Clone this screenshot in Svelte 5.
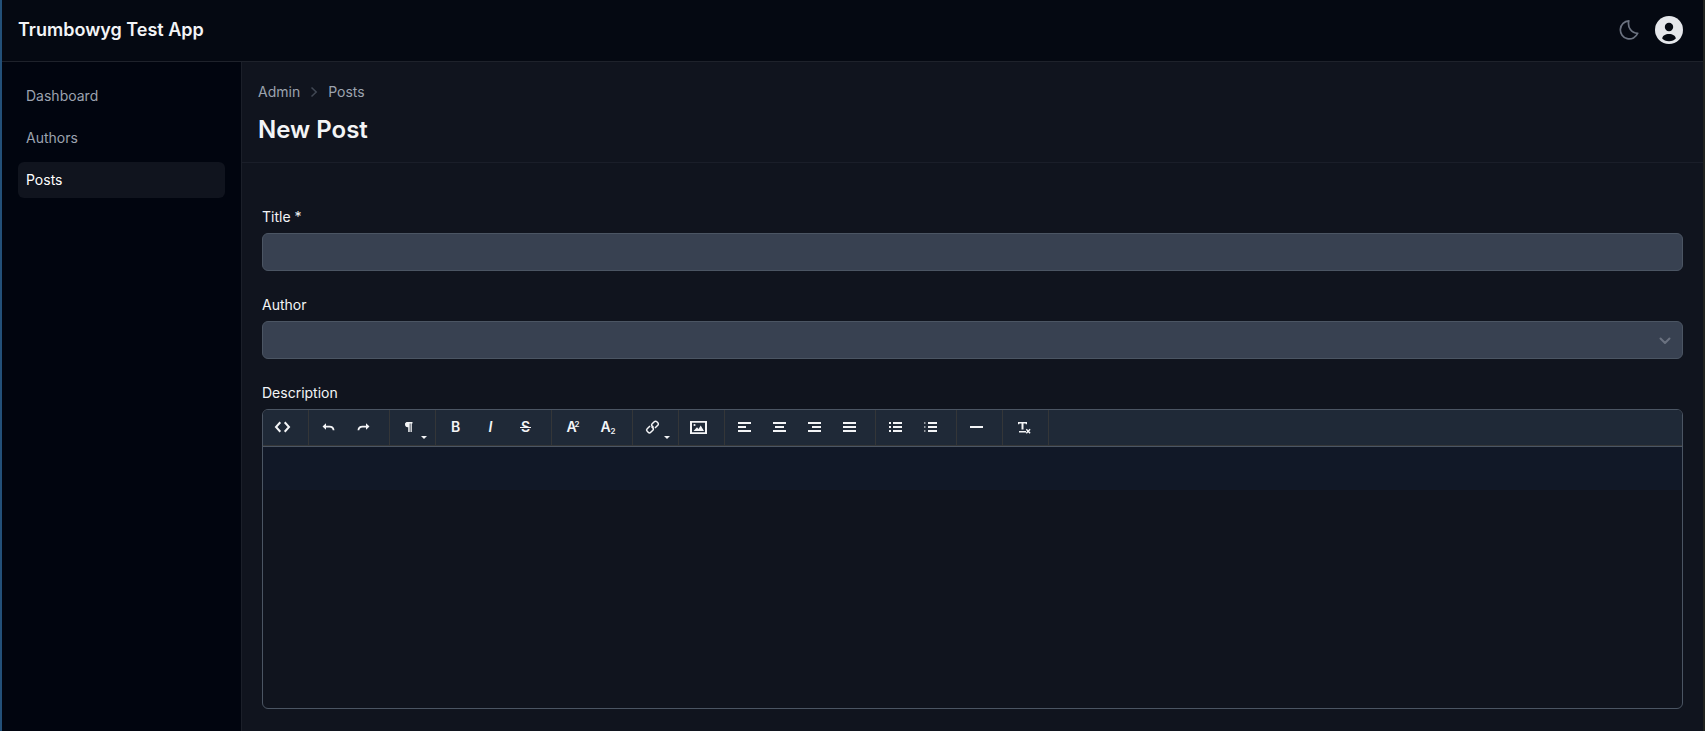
<script>
  const nav = ['Dashboard', 'Authors', 'Posts'];
  const groups = [
    ['View HTML'],
    ['Undo', 'Redo'],
    ['Formatting'],
    ['Strong', 'Emphasis', 'Deleted'],
    ['Superscript', 'Subscript'],
    ['Link'],
    ['Insert Image'],
    ['Align Left', 'Align Center', 'Align Right', 'Align Justify'],
    ['Unordered list', 'Ordered list'],
    ['Insert horizontal rule'],
    ['Remove format']
  ];
  const dropdowns = ['Formatting', 'Link'];
  const letters = { Strong: 'B', Emphasis: 'I', Deleted: 'S' };
  const fills = {
    'Align Left': 'M2 3h13v2H2zM2 7h8v2H2zM2 11h13v2H2z',
    'Align Center': 'M2 3h13v2H2zM4 7h9v2H4zM2 11h13v2H2z',
    'Align Right': 'M2 3h13v2H2zM6 7h9v2H6zM2 11h13v2H2z',
    'Align Justify': 'M2 3h13v2H2zM2 7h13v2H2zM2 11h13v2H2z',
    'Unordered list': 'M2 3h2v2H2zM2 7h2v2H2zM2 11h2v2H2zM6 3h9v2H6zM6 7h9v2H6zM6 11h9v2H6z',
    'Ordered list': 'M6 3h9v2H6zM6 7h9v2H6zM6 11h9v2H6z',
    'Insert horizontal rule': 'M2 7h13v2H2z',
    'Formatting': 'M5.500 3h6v1.500h-.7V13H9.500V4.500h-.8V13H7.200V8.300H7A2.800 2.800 0 0 1 5.500 3z',
    'Undo': 'M2.500 7.500L6 4.300V6.700H9.500C12.500 6.700 14.200 8 14.500 11.300H12.700C12.400 9.300 11.500 8.500 9.500 8.500H6V10.700z',
    'Redo': 'M14.500 7.500L11 4.300V6.700H7.500C4.500 6.700 2.800 8 2.500 11.300H4.300C4.600 9.300 5.500 8.500 7.500 8.500H11V10.700z'
  };
</script>

<div class="app">
  <header class="topbar">
    <a class="brand" href="#home">Trumbowyg Test App</a>
    <div class="actions">
      <button class="plain" aria-label="Toggle dark mode">
        <svg width="20" height="20" viewBox="0 0 20 20" fill="none" stroke="#6b7280" stroke-width="1.7" stroke-linejoin="round"><path d="M9.8 .9A9 9 0 1 0 18.700 13.300C12.500 13.300 8.300 7.500 9.800 .9Z" /></svg>
      </button>
      <button class="plain" aria-label="User menu">
        <svg width="28" height="28" viewBox="0 0 28 28"><circle cx="14" cy="14" r="14" fill="#e5e7eb" /><circle cx="14" cy="11" r="4.2" fill="#050912" /><path d="M7.2 22.600C7.600 19.500 10.300 18 14 18s6.400 1.500 6.800 4.600C19.600 24.300 17 25.200 14 25.200s-5.600-.9-6.800-2.600Z" fill="#050912" /></svg>
      </button>
    </div>
  </header>

  <div class="body">
    <nav class="sidebar" aria-label="Main">
      {#each nav as item}
        <a href={'#' + item.toLowerCase()} class:active={item === 'Posts'}>{item}</a>
      {/each}
    </nav>

    <main>
      <div class="heading">
        <div class="crumbs">
          <a href="#admin">Admin</a>
          <svg width="8" height="12" viewBox="0 0 8 12" fill="none" stroke="#414854" stroke-width="1.5"><path d="M1.500 1.500L6.200 6L1.500 10.500" /></svg>
          <a href="#posts">Posts</a>
        </div>
        <h1>New Post</h1>
      </div>

      <form>
        <div class="field">
          <label for="title">Title *</label>
          <input id="title" type="text" />
        </div>
        <div class="field">
          <label for="author">Author</label>
          <div class="select">
            <select id="author"><option value=""></option></select>
            <svg width="12" height="8" viewBox="0 0 12 8" fill="none" stroke="#6b7280" stroke-width="2" stroke-linecap="round" stroke-linejoin="round"><path d="M1.500 1.500L6 6L10.500 1.500" /></svg>
          </div>
        </div>
        <div class="field">
          <label for="description">Description</label>
          <div class="editor">
            <div class="toolbar" role="toolbar" aria-label="Formatting tools">
              {#each groups as group}
                <div class="group">
                  {#each group as name}
                    <button type="button" class="tool" aria-label={name}>
                      {#if letters[name]}
                        <span class={'letter ' + name.toLowerCase()}>{letters[name]}</span>
                      {:else if name === 'Superscript'}
                        <span class="letter script">A<small class="up">2</small></span>
                      {:else if name === 'Subscript'}
                        <span class="letter script">A<small class="down">2</small></span>
                      {:else if name === 'Remove format'}
                        <svg width="17" height="16" viewBox="0 0 17 16"><path d="M4 3h9v2.300H11.700V4.500H9.500v6H7.500v-6H5.300v.8H4zM5 12h7v1.500H5z" fill="currentColor" /><path d="M12.300 10.300l3.800 4M16.100 10.300l-3.800 4" stroke="currentColor" stroke-width="1.400" /></svg>
                      {:else if name === 'View HTML'}
                        <svg width="17" height="16" viewBox="0 0 17 16" fill="none" stroke="currentColor" stroke-width="2"><path d="M6.300 3.300L2 8l4.300 4.700M10.700 3.300L15 8l-4.300 4.700" /></svg>
                      {:else if name === 'Link'}
                        <svg width="17" height="16" viewBox="0 0 17 16" fill="none" stroke="currentColor" stroke-width="1.500"><g transform="rotate(-45 8.500 8)"><path d="M7.500 5.500H3.500A1.800 1.800 0 0 0 1.700 7.300V8.700A1.800 1.800 0 0 0 3.500 10.500H6.500A1.800 1.800 0 0 0 8.300 8.700M9.500 10.500H13.500A1.800 1.800 0 0 0 15.300 8.700V7.300A1.800 1.800 0 0 0 13.500 5.500H10.500A1.800 1.800 0 0 0 8.700 7.300M7.300 8H9.700" /></g></svg>
                      {:else if name === 'Insert Image'}
                        <svg width="17" height="16" viewBox="0 0 17 16"><path fill="currentColor" fill-rule="evenodd" d="M0 2h17v13H0zM2 3.700v9.600h13V3.700z" /><circle cx="4.500" cy="6" r="1.100" fill="currentColor" /><path fill="currentColor" d="M3.500 12L7 8.300l1.500 1.700 2.200-3.500 3.300 5.500z" /></svg>
                      {:else}
                        <svg width="17" height="16" viewBox="0 0 17 16" fill="currentColor">
                          <path d={fills[name]} />
                          {#if name === 'Ordered list'}
                            <path opacity=".55" d="M2 3h1.500v2H2zM2 7h1.500v2H2zM2 11h1.500v2H2z" />
                          {/if}
                        </svg>
                      {/if}
                      {#if dropdowns.includes(name)}<i class="caret"></i>{/if}
                    </button>
                  {/each}
                </div>
              {/each}
            </div>
            <textarea id="description" rows="1"></textarea>
          </div>
        </div>
      </form>
    </main>
  </div>
</div>

<style>
  :global(body) {
    background: #10141e;
  }
  .app {
    display: flex;
    flex-direction: column;
    box-sizing: border-box;
    min-height: 100vh;
    border-left: 2px solid #235078;
    border-right: 2px solid #20221f;
    background: #10141e;
    color: #f3f4f6;
    font: 14px/20px Inter, 'Liberation Sans', sans-serif;
  }
  a {
    color: inherit;
    text-decoration: none;
  }
  .topbar {
    display: flex;
    align-items: center;
    justify-content: space-between;
    box-sizing: border-box;
    height: 62px;
    padding: 0 20px 2px 16px;
    border-bottom: 1px solid #1e222b;
    background: #050912;
  }
  .brand {
    font-size: 18px;
    line-height: 28px;
    font-weight: 600;
  }
  .actions {
    display: flex;
    align-items: center;
    gap: 16px;
  }
  .plain {
    display: flex;
    padding: 0;
    border: 0;
    background: none;
  }
  .body {
    flex: 1;
    display: flex;
  }
  .sidebar {
    display: flex;
    flex-direction: column;
    gap: 6px;
    box-sizing: border-box;
    flex: 0 0 240px;
    padding: 16px;
    border-right: 1px solid #1b1f29;
    background: #01050f;
    color: #9ca3af;
  }
  .sidebar a {
    padding: 8px;
    border-radius: 6px;
  }
  .sidebar .active {
    background: #10141e;
    color: #fff;
  }
  main {
    flex: 1;
    min-width: 0;
  }
  .heading {
    display: flex;
    flex-direction: column;
    gap: 12px;
    padding: 20px 16px 16px;
    border-bottom: 1px solid #1a1e29;
  }
  .crumbs {
    display: flex;
    align-items: center;
    gap: 10px;
    color: #9ca3af;
  }
  h1 {
    margin: 0;
    font-size: 24px;
    line-height: 32px;
    font-weight: 600;
  }
  form {
    display: flex;
    flex-direction: column;
    gap: 24px;
    padding: 44px 20px 22px;
  }
  .field {
    display: flex;
    flex-direction: column;
    gap: 6px;
  }
  input,
  select {
    box-sizing: border-box;
    width: 100%;
    height: 38px;
    padding: 8px 12px;
    border: 1px solid #4b5563;
    border-radius: 6px;
    background: #384151;
    color: inherit;
    font: inherit;
    appearance: none;
  }
  .select {
    display: flex;
    position: relative;
  }
  .select svg {
    position: absolute;
    right: 12px;
    top: 16px;
    pointer-events: none;
  }
  .editor {
    box-sizing: border-box;
    min-height: 300px;
    border: 1px solid #4b5563;
    border-radius: 6px;
    overflow: hidden;
  }
  .toolbar {
    display: flex;
    border-bottom: 1px solid #4b5563;
    background: #1f2937;
  }
  .group {
    display: flex;
    padding: 0 8px 0 2px;
    border-right: 1px solid #343638;
    border-bottom: 1px solid #343638;
  }
  .toolbar::after {
    content: '';
    flex: 1;
    border-bottom: 1px solid #343638;
  }
  .tool {
    display: flex;
    align-items: center;
    justify-content: center;
    position: relative;
    box-sizing: border-box;
    width: 35px;
    height: 35px;
    padding: 0 0 1px;
    border: 0;
    background: none;
    color: #f3f4f6;
  }
  .letter {
    font: 600 14px/16px Inter, sans-serif;
  }
  .letter small {
    display: inline-block;
    font-size: 8px;
    line-height: 8px;
  }
  .script {
    padding-left: 3px;
  }
  .up {
    vertical-align: 5px;
    margin-left: -2px;
  }
  .down {
    vertical-align: -2px;
  }
  .emphasis {
    font-style: italic;
  }
  .deleted {
    position: relative;
  }
  .deleted::after {
    content: '';
    position: absolute;
    inset: 8px -1px auto;
    height: 1px;
    background: #f3f4f6;
    box-shadow: 0 1px #1f2937;
  }
  .caret {
    position: absolute;
    right: 0;
    bottom: 6px;
    border: 3px solid transparent;
    border-top-color: #f3f4f6;
    border-bottom: 0;
  }
  textarea {
    display: block;
    box-sizing: border-box;
    width: 100%;
    height: 43px;
    padding: 10px;
    border: 0;
    background: #111827;
    color: inherit;
    font: inherit;
    resize: none;
  }
</style>
